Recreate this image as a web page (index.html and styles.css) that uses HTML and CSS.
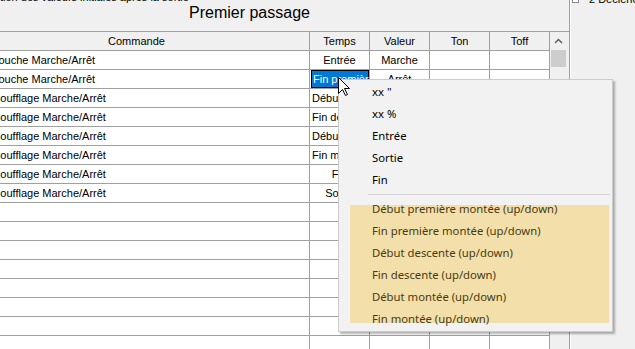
FILE: index.html
```html
<!DOCTYPE html>
<html lang="fr">
<head>
  <meta charset="UTF-8" />
  <title>Premier passage</title>
  <link rel="stylesheet" href="styles.css">
</head>
<body>
  <div class="page">
    <div class="main">
      <div class="caption"><span>tion des valeurs initiales après la sortie</span></div>
      <div class="title">Premier passage</div>
      <div class="grid">
        <div class="cols">
          <div class="row head">
            <div class="c cmd">Commande</div>
            <div class="c">Temps</div>
            <div class="c">Valeur</div>
            <div class="c">Ton</div>
            <div class="c">Toff</div>
          </div>
          <div class="row">
            <div class="c cmd">Touche Marche/Arrêt</div>
            <div class="c">Entrée</div>
            <div class="c">Marche</div>
            <div class="c"></div>
            <div class="c"></div>
          </div>
          <div class="row">
            <div class="c cmd">Touche Marche/Arrêt</div>
            <div class="c l"><span class="sel">Fin première montée (up/down)</span></div>
            <div class="c">Arrêt</div>
            <div class="c"></div>
            <div class="c"></div>
          </div>
          <div class="row">
            <div class="c cmd">Soufflage Marche/Arrêt</div>
            <div class="c l">Début descente (up/down)</div>
            <div class="c"></div>
            <div class="c"></div>
            <div class="c"></div>
          </div>
          <div class="row">
            <div class="c cmd">Soufflage Marche/Arrêt</div>
            <div class="c l">Fin descente (up/down)</div>
            <div class="c"></div>
            <div class="c"></div>
            <div class="c"></div>
          </div>
          <div class="row">
            <div class="c cmd">Soufflage Marche/Arrêt</div>
            <div class="c l">Début montée (up/down)</div>
            <div class="c"></div>
            <div class="c"></div>
            <div class="c"></div>
          </div>
          <div class="row">
            <div class="c cmd">Soufflage Marche/Arrêt</div>
            <div class="c l">Fin montée (up/down)</div>
            <div class="c"></div>
            <div class="c"></div>
            <div class="c"></div>
          </div>
          <div class="row">
            <div class="c cmd">Soufflage Marche/Arrêt</div>
            <div class="c">Fin</div>
            <div class="c"></div>
            <div class="c"></div>
            <div class="c"></div>
          </div>
          <div class="row">
            <div class="c cmd">Soufflage Marche/Arrêt</div>
            <div class="c">Sortie</div>
            <div class="c"></div>
            <div class="c"></div>
            <div class="c"></div>
          </div>
          <div class="row"><div class="c cmd"></div><div class="c"></div><div class="c"></div><div class="c"></div><div class="c"></div></div>
          <div class="row"><div class="c cmd"></div><div class="c"></div><div class="c"></div><div class="c"></div><div class="c"></div></div>
          <div class="row"><div class="c cmd"></div><div class="c"></div><div class="c"></div><div class="c"></div><div class="c"></div></div>
          <div class="row"><div class="c cmd"></div><div class="c"></div><div class="c"></div><div class="c"></div><div class="c"></div></div>
          <div class="row"><div class="c cmd"></div><div class="c"></div><div class="c"></div><div class="c"></div><div class="c"></div></div>
          <div class="row"><div class="c cmd"></div><div class="c"></div><div class="c"></div><div class="c"></div><div class="c"></div></div>
          <div class="row"><div class="c cmd"></div><div class="c"></div><div class="c"></div><div class="c"></div><div class="c"></div></div>
          <div class="row"><div class="c cmd"></div><div class="c"></div><div class="c"></div><div class="c"></div><div class="c"></div></div>
        </div>
        <div class="vscroll">
          <div class="up">
            <svg width="9" height="6" viewBox="0 0 9 6"><path d="M1 5 L4.5 1.5 L8 5" fill="none" stroke="#606060" stroke-width="1.5"/></svg>
          </div>
          <div class="thumb"></div>
        </div>
      </div>
    </div>
    <div class="divider"></div>
    <div class="side">
      <span class="chk"></span>
      <span class="lbl">2 Déclenchement</span>
    </div>
  </div>

  <!-- menu contextuel -->
  <div class="menu">
    <div class="mi">xx "</div>
    <div class="mi">xx %</div>
    <div class="mi">Entrée</div>
    <div class="mi">Sortie</div>
    <div class="mi">Fin</div>
    <div class="sep"></div>
    <div class="hl">
      <div class="mi">Début première montée (up/down)</div>
      <div class="mi">Fin première montée (up/down)</div>
      <div class="mi">Début descente (up/down)</div>
      <div class="mi">Fin descente (up/down)</div>
      <div class="mi">Début montée (up/down)</div>
      <div class="mi">Fin montée (up/down)</div>
    </div>
  </div>

  <svg class="cursor" width="13" height="20" viewBox="0 0 13 20">
    <path d="M0.5 0.5 L0.5 16.5 L4.5 12.5 L7.5 18.5 L9.5 17.5 L6.5 11.5 L11.5 11.5 Z" fill="#fff" stroke="#000" stroke-width="1"/>
  </svg>
</body>
</html>
```

FILE: styles.css
```css
body {
  margin: 0;
  background: #f0f0f0;
  font-family: "Liberation Sans", Arial, sans-serif;
  font-size: 11px;
  color: #000;
  width: 635px;
  height: 349px;
  overflow: hidden;
}
.page {
  display: flex;
  height: 349px;
}
.main {
  width: 569px;
  overflow: hidden;
}
.caption {
  height: 3px;
  overflow: hidden;
}
.caption span {
  display: block;
  line-height: 13px;
  margin-top: -9px;
  white-space: nowrap;
}
.title {
  height: 28px;
  line-height: 20px;
  font-size: 16px;
  text-align: center;
  margin-left: -70px;
}
.grid {
  display: flex;
  border-top: 1px solid #a0a0a0;
}
.cols {
  margin-left: -8px;
  width: 558px;
  flex-shrink: 0;
}
.row {
  display: flex;
  height: 19px;
  border-bottom: 1px solid #a0a0a0;
  box-sizing: border-box;
  background: #fff;
}
.row.head {
  background: #f0f0f0;
}
.c {
  width: 60px;
  flex-shrink: 0;
  box-sizing: border-box;
  border-right: 1px solid #a0a0a0;
  line-height: 18px;
  text-align: center;
  white-space: nowrap;
  overflow: hidden;
}
.c.cmd {
  width: 318px;
  text-align: left;
  padding-left: 1px;
}
.head .c.cmd {
  text-align: center;
  padding-right: 29px;
}
.c.l {
  text-align: left;
  padding-left: 2px;
}
.sel {
  display: block;
  margin-left: -1px;
  height: 18px;
  box-sizing: border-box;
  border: 1px solid #000;
  background: #0078d7;
  color: #fff;
  line-height: 16px;
  padding-left: 1px;
}
.vscroll {
  width: 17px;
  background: #f0f0f0;
}
.up {
  height: 17px;
  display: flex;
  align-items: center;
  justify-content: center;
}
.thumb {
  margin: 1px 1px 0 1px;
  height: 17px;
  background: #cdcdcd;
}
.divider {
  width: 1px;
  background: #a0a0a0;
  border-right: 1px solid #fff;
}
.side {
  flex: 1;
  display: flex;
  align-items: flex-end;
  gap: 10px;
  height: 3px;
  padding-left: 1px;
  overflow: hidden;
}
.chk {
  width: 5px;
  height: 11px;
  flex-shrink: 0;
  border: 1px solid #8a8a8a;
  background: #fff;
}
.lbl {
  line-height: 13px;
  margin-bottom: -3px;
  white-space: nowrap;
}
.menu {
  position: absolute;
  left: 338px;
  top: 79px;
  width: 275px;
  box-sizing: border-box;
  padding: 1px 0;
  background: #f2f2f2;
  border: 1px solid #cccccc;
  box-shadow: 2px 2px 2px rgba(0,0,0,0.3);
  font-family: "Noto Sans", "Liberation Sans", sans-serif;
  font-size: 11.3px;
}
.mi {
  height: 22px;
  line-height: 22px;
  padding-left: 33px;
  white-space: nowrap;
}
.sep {
  height: 1px;
  margin: 3px 2px 3px 29px;
  background: #d7d7d7;
}
.hl {
  margin: 0 3px 0 11px;
  background: linear-gradient(#f3dfa9, #f3dfa9) no-repeat center;
  background-size: 100% calc(100% - 14px);
}
.hl .mi {
  padding-left: 22px;
  color: #4a3a12;
}
.cursor {
  position: absolute;
  left: 338px;
  top: 77px;
}
```
